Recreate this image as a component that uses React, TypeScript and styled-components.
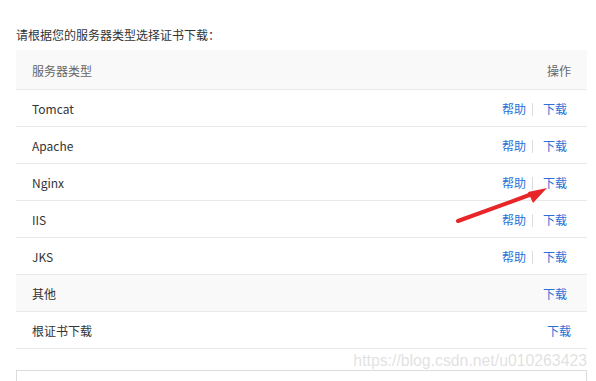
import React from "react";
import styled, { createGlobalStyle } from "styled-components";

const Global = createGlobalStyle`
  html, body { margin: 0; padding: 0; background: #fff; overflow: hidden; }
  body {
    font-family: "Noto Sans CJK SC", "Open Sans", sans-serif;
    font-size: 12px;
    color: #333;
  }
`;

const Page = styled.div`
  position: relative;
  width: 596px;
  height: 381px;
  padding: 26px 9px 0 16px;
  box-sizing: border-box;
`;

const Title = styled.div`
  line-height: 18px;
  height: 18px;
  margin-bottom: 6px;
  color: #333;
`;

const Table = styled.div`
  display: flex;
  flex-direction: column;
  width: 571px;
`;

const Row = styled.div<{ $shade?: boolean; $head?: boolean }>`
  display: flex;
  align-items: center;
  justify-content: space-between;
  height: ${(p) => (p.$head ? 39 : 36)}px;
  box-sizing: content-box;
  border-bottom: 1px solid #e9e9e9;
  background: ${(p) => (p.$shade ? "#f9f9f9" : "#fff")};
  color: ${(p) => (p.$head ? "#666" : "#333")};
  padding-left: 16px;
  line-height: 16px;
  & > * {
    position: relative;
    top: 1px;
  }
`;

const Actions = styled.div<{ $pad: number }>`
  display: flex;
  align-items: center;
  padding-right: ${(p) => p.$pad}px;
`;

const Link = styled.a`
  color: #2a70d8;
  text-decoration: none;
  cursor: pointer;
`;

const Sep = styled.span`
  width: 1px;
  height: 13px;
  background: #dcdcdc;
  margin: 0 10px 0 6px;
`;

const InputBox = styled.div`
  margin-top: 21px;
  width: 571px;
  height: 30px;
  border: 1px solid #dcdcdc;
  box-sizing: border-box;
`;

const Watermark = styled.div`
  position: absolute;
  right: 9px;
  top: 351px;
  font-family: "Liberation Sans", Arial, sans-serif;
  font-size: 15.8px;
  line-height: 20px;
  color: rgba(200, 200, 200, 0.55);
  white-space: nowrap;
  pointer-events: none;
`;

const Arrow = styled.svg`
  position: absolute;
  left: 450px;
  top: 178px;
  pointer-events: none;
`;

type Item = { name: string; help: boolean; shade?: boolean; pad: number };

const items: Item[] = [
  { name: "Tomcat", help: true, pad: 20 },
  { name: "Apache", help: true, pad: 20 },
  { name: "Nginx", help: true, pad: 20 },
  { name: "IIS", help: true, pad: 20 },
  { name: "JKS", help: true, pad: 20 },
  { name: "其他", help: false, shade: true, pad: 20 },
  { name: "根证书下载", help: false, pad: 16 },
];

export default function App() {
  return (
    <>
      <Global />
      <Page>
        <Title>请根据您的服务器类型选择证书下载：</Title>
        <Table>
          <Row $head $shade>
            <span>服务器类型</span>
            <Actions $pad={16}>操作</Actions>
          </Row>
          {items.map((it) => (
            <Row key={it.name} $shade={it.shade}>
              <span>{it.name}</span>
              <Actions $pad={it.pad}>
                {it.help && (
                  <>
                    <Link>帮助</Link>
                    <Sep />
                  </>
                )}
                <Link>下载</Link>
              </Actions>
            </Row>
          ))}
        </Table>
        <InputBox />
        <Watermark>https://blog.csdn.net/u010263423</Watermark>
        <Arrow width="110" height="56" viewBox="0 0 110 56">
          <line x1="8" y1="43" x2="82" y2="16" stroke="#e8262a" strokeWidth="4" strokeLinecap="round" />
          <polygon points="97,10 78,14 83,25" fill="#e8262a" />
        </Arrow>
      </Page>
    </>
  );
}
